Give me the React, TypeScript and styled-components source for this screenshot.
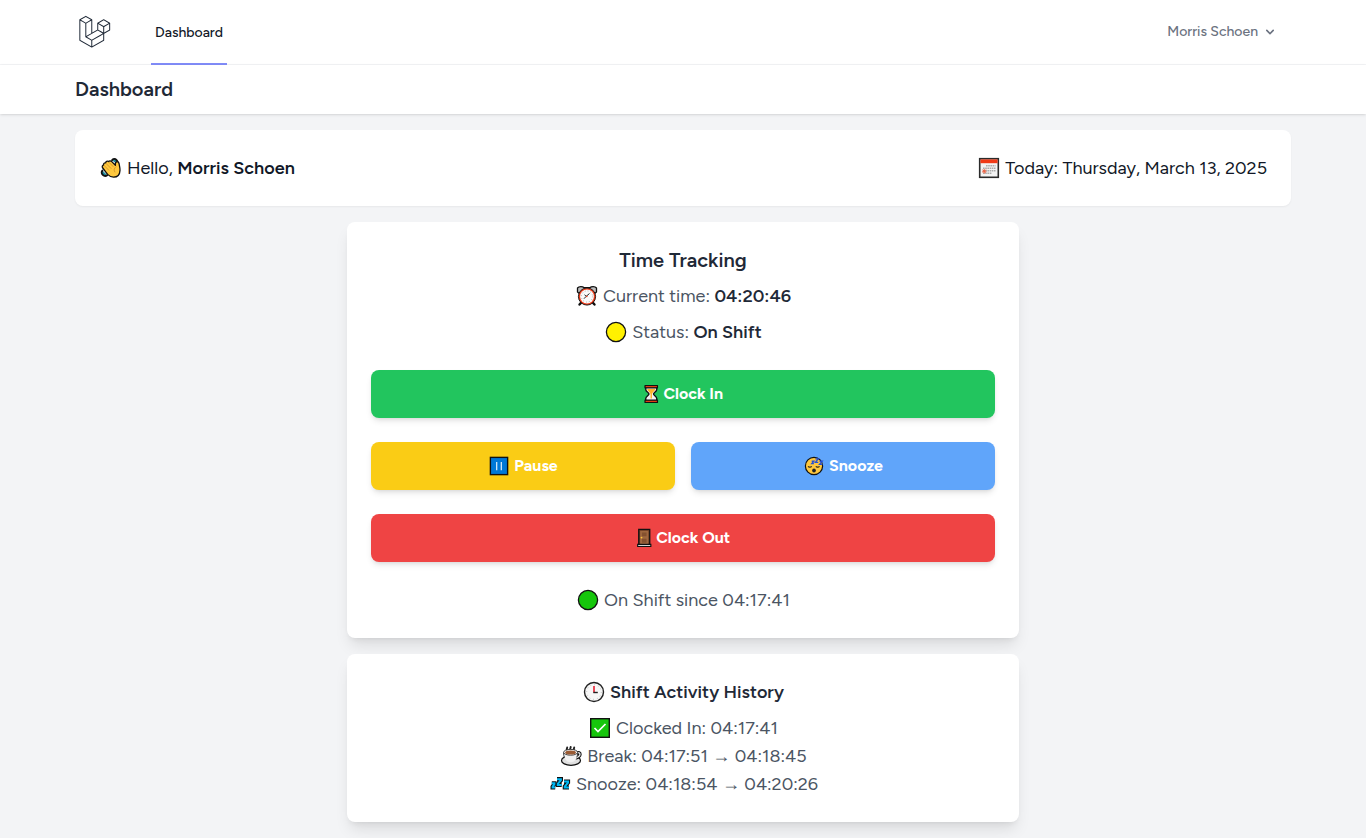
import React from "react";
import styled, { createGlobalStyle } from "styled-components";

const GlobalStyle = createGlobalStyle`
  *, *::before, *::after { box-sizing: border-box; }
  body {
    margin: 0;
    background: #f3f4f6;
    color: #111827;
    font-family: Figtree, Lato, "Open Sans", sans-serif;
    font-size: 16px;
    line-height: 24px;
  }
  h1, h2, h3, p, ul { margin: 0; padding: 0; font-weight: inherit; }
`;

const Container = styled.div`
  max-width: 1280px;
  margin: 0 auto;
  padding: 0 32px;
`;

const Nav = styled.nav`
  background: #fff;
  border-bottom: 1px solid #f3f4f6;
`;

const NavRow = styled(Container)`
  display: flex;
  justify-content: space-between;
  height: 64px;
`;

const NavStart = styled.div`
  display: flex;
  gap: 40px;
`;

const LogoLink = styled.a`
  display: flex;
  align-items: center;
  color: #1f2937;
`;

const NavLink = styled.a`
  display: flex;
  align-items: center;
  margin: -1px 0;
  padding: 4px 4px 0;
  border-bottom: 2px solid #818cf8;
  color: #111827;
  font-size: 14px;
  line-height: 20px;
  font-weight: 500;
  text-decoration: none;
`;

const UserButton = styled.button`
  display: flex;
  align-items: center;
  align-self: center;
  gap: 4px;
  padding: 8px 13px 8px 12px;
  border: 0;
  background: #fff;
  color: #6b7280;
  font: inherit;
  font-size: 14px;
  line-height: 16px;
  font-weight: 500;
  cursor: pointer;
`;

const Header = styled.header`
  position: relative;
  padding: 12px 0;
  background: #fff;
  box-shadow: 0 1px 3px rgba(0, 0, 0, 0.1), 0 1px 2px -1px rgba(0, 0, 0, 0.1);
`;

const PageTitle = styled.h1`
  color: #1f2937;
  font-size: 20px;
  line-height: 25px;
  font-weight: 600;
`;

const Content = styled(Container).attrs({ as: "main" })`
  display: flex;
  flex-direction: column;
  gap: 16px;
  padding-top: 16px;
  padding-bottom: 16px;
`;

const Card = styled.section`
  padding: 24px;
  border-radius: 8px;
  background: #fff;
`;

const Greeting = styled(Card)`
  display: flex;
  justify-content: space-between;
  box-shadow: 0 1px 2px rgba(0, 0, 0, 0.05);
`;

const Panel = styled(Card)`
  width: 100%;
  max-width: 672px;
  margin: 0 auto;
  box-shadow: 0 10px 15px -3px rgba(0, 0, 0, 0.1), 0 4px 6px -4px rgba(0, 0, 0, 0.1);
`;

const Stack = styled.div<{ $gap: number }>`
  display: flex;
  flex-direction: column;
  gap: ${(p) => p.$gap}px;
`;

const Line = styled.p<{ $tone?: "dark" | "muted" }>`
  display: flex;
  align-items: center;
  justify-content: center;
  gap: 4px;
  color: ${(p) => (p.$tone === "dark" ? "#111827" : "#4b5563")};
  font-size: 18px;
  line-height: 28px;
`;

const Strong = styled.strong<{ $tone?: "dark" | "muted" }>`
  color: ${(p) => (p.$tone === "dark" ? "#111827" : "#1f2937")};
  font-weight: 600;
`;

const Arrow = styled.span`
  font-family: "Liberation Serif", "Times New Roman", serif;
  line-height: 1;
`;

const PanelTitle = styled.h2<{ $size: number }>`
  display: flex;
  align-items: center;
  justify-content: center;
  gap: 4px;
  color: #1f2937;
  font-size: ${(p) => p.$size}px;
  line-height: 28px;
  font-weight: 600;
`;

const ButtonPair = styled.div`
  display: grid;
  grid-template-columns: 1fr 1fr;
  gap: 16px;
`;

const ActionButton = styled.button<{ $color: string }>`
  display: flex;
  align-items: center;
  justify-content: center;
  gap: 4px;
  width: 100%;
  padding: 12px 24px;
  border: 0;
  border-radius: 8px;
  background: ${(p) => p.$color};
  box-shadow: 0 4px 6px -1px rgba(0, 0, 0, 0.1), 0 2px 4px -2px rgba(0, 0, 0, 0.1);
  color: #fff;
  font: inherit;
  font-size: 16px;
  line-height: 24px;
  font-weight: 700;
  cursor: pointer;
`;

const Icon = styled.svg`
  display: block;
  flex: none;
`;

/* Every emoji is drawn on a 24-unit tall grid. */
const Emoji = ({ w = 24, size = 24, children }: { w?: number; size?: number; children: React.ReactNode }) => (
  <Icon width={(w * size) / 24} height={size} viewBox={`${(24 - w) / 2} 0 ${w} 24`} aria-hidden="true">
    {children}
  </Icon>
);

const Logo = () => (
  <Icon width="36" height="36" viewBox="-7 -3 58 58" fill="currentColor" aria-hidden="true">
    <path d="M49.626 11.564a.809.809 0 0 1 .028.209v10.972a.8.8 0 0 1-.402.694l-9.209 5.302V39.25c0 .286-.152.55-.4.694L20.42 51.01c-.044.025-.092.041-.14.058-.018.006-.035.017-.054.022a.805.805 0 0 1-.41 0c-.022-.006-.042-.018-.063-.026-.044-.016-.09-.03-.132-.054L.402 39.944A.801.801 0 0 1 0 39.25V6.334c0-.072.01-.142.028-.21.006-.023.02-.044.028-.067.015-.042.029-.085.051-.124.015-.026.037-.047.055-.071.023-.032.044-.065.071-.093.023-.023.053-.04.079-.06.029-.024.055-.05.088-.069h.001l9.61-5.533a.802.802 0 0 1 .8 0l9.61 5.533h.002c.032.02.059.045.088.068.026.02.055.038.078.06.028.029.048.062.072.094.017.024.04.045.054.071.023.04.036.082.052.124.008.023.022.044.028.068a.809.809 0 0 1 .028.209v20.559l8.008-4.611v-10.51c0-.07.01-.141.028-.208.007-.024.02-.045.028-.068.016-.042.03-.085.052-.124.015-.026.037-.047.054-.071.024-.032.044-.065.072-.093.023-.023.052-.04.078-.06.03-.024.056-.05.088-.069h.001l9.611-5.533a.801.801 0 0 1 .8 0l9.61 5.533c.034.02.06.045.09.068.025.02.054.038.077.06.028.029.048.062.072.094.018.024.04.045.054.071.023.039.036.082.052.124.009.023.022.044.028.068zm-1.574 10.718v-9.124l-3.363 1.936-4.646 2.675v9.124l8.01-4.611zm-9.61 16.505v-9.13l-4.57 2.61-13.05 7.448v9.216l17.62-10.144zM1.602 7.719v31.068L19.22 48.93v-9.214l-9.204-5.209-.003-.002-.004-.002c-.031-.018-.057-.044-.086-.066-.025-.02-.054-.036-.076-.058l-.002-.003c-.026-.025-.044-.056-.066-.084-.02-.027-.044-.05-.06-.078l-.001-.003c-.018-.03-.029-.066-.042-.1-.013-.03-.03-.058-.038-.09v-.001c-.01-.038-.012-.078-.016-.117-.004-.03-.012-.06-.012-.09v-.002-21.481L4.965 9.654 1.602 7.72zm8.81-5.994L2.405 6.334l8.005 4.609 8.006-4.61-8.006-4.608zm4.164 28.764l4.645-2.674V7.719l-3.363 1.936-4.646 2.675v20.096l3.364-1.937zM39.243 7.164l-8.006 4.609 8.006 4.609 8.005-4.61-8.005-4.608zm-.801 10.605l-4.646-2.675-3.363-1.936v9.124l4.645 2.674 3.364 1.937v-9.124zM20.02 38.33l11.743-6.704 5.87-3.35-8-4.606-9.211 5.303-8.395 4.833 7.993 4.524z" />
  </Icon>
);

const Chevron = () => (
  <Icon width="16" height="16" viewBox="0 0 20 20" fill="currentColor" aria-hidden="true">
    <path fillRule="evenodd" clipRule="evenodd" d="M5.293 7.293a1 1 0 011.414 0L10 10.586l3.293-3.293a1 1 0 111.414 1.414l-4 4a1 1 0 01-1.414 0l-4-4a1 1 0 010-1.414z" />
  </Icon>
);

const Wave = () => (
  <Emoji>
    <g strokeLinejoin="round" strokeLinecap="round">
      <path d="M13 4.200c1-1.800 3.300-1.600 4.400-.4s1.600 3 .8 4.500M3.500 14.500c-1.300 1.200-1 3.300.2 4.400s3.200 1.400 4.500.3" fill="#17717f" stroke="#111" strokeWidth="1.800" />
      <path d="M15 4.600c1 .1 1.500.8 1.500 1.800M4.400 16.700c.3.900.9 1.300 1.800 1.400" fill="none" stroke="#2aa9c0" strokeWidth="1" />
      <path d="M3.400 11.500c-.5-1.300.2-2.300 1.200-2.400-.4-1.400.7-2.500 2-2.200.1-1.500 1.700-2.200 2.900-1.300.8-1.100 2.200-1 3.200 0l3.700 3.700c-.2-1.800.1-3.500 1.700-3.700 2-.2 2 1.900 2.300 3.900.3 1.500.7 3 .6 4.900-.2 4.200-2.800 6.800-6.400 6.800-2.700 0-4.400-1.200-6-2.800z" fill="#ffc83d" stroke="#111" strokeWidth="1.300" />
      <path d="M5.200 9.600l4.600 4.600M7.200 7.600l4.800 4.800M10 6.400l4.200 4.200M17 10.600c-2 1.600-2.400 3.600-1.200 5.400" fill="none" stroke="#c4872a" strokeWidth=".7" />
    </g>
  </Emoji>
);

const Calendar = () => (
  <Emoji>
    <rect x="2.700" y="2.700" width="18.600" height="18.600" fill="#f3f3f3" stroke="#2b2b2b" strokeWidth="1.600" />
    <path d="M3.400 3.400h17.200v3.800H3.400z" fill="#f03a17" />
    <path d="M9 9.700h9.500M6 12.200h12.500M6 14.700h12.500M6 17.200h9" stroke="#aaa" strokeWidth="1.600" strokeDasharray="1.600 .6" />
    <path d="M5 15.200h4.600M7.300 13v4.600M5.700 13.600l3.200 3.200M8.900 13.600l-3.200 3.200" stroke="#f0603f" strokeWidth=".9" />
  </Emoji>
);

const AlarmClock = () => (
  <Emoji>
    <path d="M2.500 8V4C4 2.300 7.500 2.300 9.200 3.700h5.600C16.500 2.300 20 2.300 21.500 4v4l-2.500 2H5z" fill="#bdbdbd" stroke="#111" strokeWidth="1.300" strokeLinejoin="round" />
    <path d="M6.300 18.500l-1.800 2M17.700 18.500l1.800 2" stroke="#111" strokeWidth="2.400" strokeLinecap="round" />
    <circle cx="12" cy="12.500" r="8.600" fill="#f03a17" stroke="#111" strokeWidth=".9" />
    <circle cx="12" cy="12.500" r="6.900" fill="#fafafa" />
    <circle cx="12" cy="12.500" r="5.600" fill="none" stroke="#999" strokeWidth=".9" strokeDasharray=".8 2.130" />
    <path d="M14.500 9.500L11 12.500l-2 2.200M9.500 10.800l2 1.700" fill="none" stroke="#222" strokeWidth="1" />
    <circle cx="11.800" cy="12.500" r=".8" fill="#f03a17" />
  </Emoji>
);

const Dot = ({ color }: { color: string }) => (
  <Emoji>
    <circle cx="12" cy="12" r="9.600" fill={color} stroke="#111" strokeWidth="1.300" />
  </Emoji>
);

const Hourglass = () => (
  <Emoji w={18} size={22}>
    <path d="M6 4.500h12V7c0 2.500-3.500 3.500-3.500 5s3.500 2.500 3.500 5v2.500H6V17c0-2.500 3.500-3.500 3.500-5S6 9.500 6 7z" fill="#f4f4f4" stroke="#111" strokeWidth="1.500" />
    <path d="M7.500 6.500h9c-.2 2-3.300 3.500-3.700 5.500v5h-1.600v-5c-.4-2-3.500-3.500-3.700-5.500z" fill="#ffb42c" />
    <path d="M5.200 2.700h13.600v2.600H5.200zM5.200 18.700h13.600v2.600H5.200z" fill="#e03c14" stroke="#111" strokeWidth="1.300" strokeLinejoin="round" />
  </Emoji>
);

const PauseSign = () => (
  <Emoji size={22}>
    <rect x="2.600" y="2.600" width="18.800" height="18.800" fill="#0078d7" stroke="#111" strokeWidth="1.500" />
    <path d="M9.500 7.500v9M14.500 7.500v9" stroke="#e8f3fc" strokeWidth="1.300" />
  </Emoji>
);

const Sleepy = () => (
  <Emoji size={22}>
    <circle cx="12" cy="12" r="9.400" fill="#ffc83d" stroke="#111" strokeWidth="1.300" />
    <path d="M5.500 12.500c1 1.100 3 1.100 4 0M14 12.500c1 1.100 3 1.100 4 0" fill="none" stroke="#222" strokeWidth="1.300" />
    <ellipse cx="12" cy="17" rx="2" ry="2.200" fill="#222" />
    <path d="M9.500 6.800h2.400l-2.400 2.700h2.400M13.500 4.200h3.200L13.500 8h3.200M18 6.800h3L18 10.300h3" fill="none" stroke="#2450d8" strokeWidth="1.400" />
  </Emoji>
);

const Door = () => (
  <Emoji w={18} size={22}>
    <path d="M6 2.600h12v17.400H6z" fill="#6b3d24" stroke="#111" strokeWidth="1.400" />
    <path d="M7.500 4.200h9v14.800h-9z" fill="#a0683f" />
    <path d="M9.500 6h5v4h-5zM9.500 12.800h5v4.400h-5z" fill="#84512f" />
    <circle cx="9" cy="11.500" r="1" fill="#ffc83d" />
    <path d="M4.800 19h14.400v2.300H4.800z" fill="#d5d5d5" stroke="#111" strokeWidth="1.200" />
  </Emoji>
);

const Clock = () => (
  <Emoji>
    <circle cx="12" cy="12" r="9.500" fill="#f7f7f7" stroke="#222" strokeWidth="1.400" />
    <circle cx="12" cy="12" r="7.300" fill="none" stroke="#aaa" strokeWidth=".9" strokeDasharray=".8 3.020" />
    <path d="M12 6V12.500" stroke="#e81224" strokeWidth="1.500" />
    <path d="M11.300 12.500h4.500" stroke="#222" strokeWidth="1.400" />
  </Emoji>
);

const Check = () => (
  <Emoji>
    <rect x="2.700" y="2.700" width="18.600" height="18.600" fill="#16c60c" stroke="#111" strokeWidth="1.400" />
    <path d="M6.500 12l3.500 3.500 7.500-7.500" fill="none" stroke="#fff" strokeWidth="1.700" />
  </Emoji>
);

const Coffee = () => (
  <Emoji>
    <path d="M8 6c-1-1 .3-1.500.2-2.500M11.500 5.500c-1-1 .3-1.500.2-2.500M15 6c-1-1 .3-1.500.2-2.500" fill="none" stroke="#222" strokeWidth="1.900" strokeLinecap="round" />
    <ellipse cx="12" cy="16.500" rx="9.500" ry="4.800" fill="#e0e0e0" stroke="#111" strokeWidth="1.200" />
    <path d="M17.500 9c4.500-1.600 5.300 3.500-1.500 5" fill="none" stroke="#111" strokeWidth="3.400" />
    <path d="M17.500 9c4.500-1.600 5.300 3.500-1.500 5" fill="none" stroke="#e9e9e9" strokeWidth="1.300" />
    <path d="M4.800 8.500c0 5 2 9.800 6.900 9.800s6.900-4.800 6.900-9.800z" fill="#f2f2f2" />
    <path d="M4.500 8.500c0 2 .3 3.500 1 5M18.700 8.500c0 2-.3 3.500-1 5" fill="none" stroke="#333" strokeWidth=".9" />
    <ellipse cx="11.600" cy="8.300" rx="7" ry="2.900" fill="#f7f7f7" stroke="#333" strokeWidth=".9" />
    <ellipse cx="11.600" cy="8.600" rx="5.400" ry="2" fill="#9a5b34" />
  </Emoji>
);

const snores = [
  "M3.800 11.300h2.600v.8l-1.800 2.600v.8h2.600",
  "M9 7.200h3.900v1L9.800 11.900v1h3.900",
  "M16 9.600h4v1l-3.200 3.900v1H21",
];
const Zzz = () => (
  <Emoji>
    {snores.map((d) => <path key={d} d={d} fill="none" stroke="#111" strokeWidth="4.200" />)}
    {snores.map((d) => <path key={d} d={d} fill="none" stroke="#00b7f1" strokeWidth="2" />)}
  </Emoji>
);

export default function App() {
  return (
    <>
      <GlobalStyle />
      <Nav>
        <NavRow>
          <NavStart>
            <LogoLink href="#" aria-label="Home"><Logo /></LogoLink>
            <NavLink href="#" aria-current="page">Dashboard</NavLink>
          </NavStart>
          <UserButton type="button">Morris Schoen<Chevron /></UserButton>
        </NavRow>
      </Nav>
      <Header>
        <Container><PageTitle>Dashboard</PageTitle></Container>
      </Header>
      <Content>
        <Greeting>
          <Line $tone="dark"><Wave /><span>Hello, <Strong $tone="dark">Morris Schoen</Strong></span></Line>
          <Line $tone="dark"><Calendar /><span>Today: Thursday, March 13, 2025</span></Line>
        </Greeting>
        <Panel>
          <Stack $gap={24}>
            <Stack $gap={8}>
              <PanelTitle $size={20}>Time Tracking</PanelTitle>
              <Line><AlarmClock /><span>Current time: <Strong>04:20:46</Strong></span></Line>
              <Line><Dot color="#fff100" /><span>Status: <Strong>On Shift</Strong></span></Line>
            </Stack>
            <ActionButton type="button" $color="#22c55e"><Hourglass />Clock In</ActionButton>
            <ButtonPair>
              <ActionButton type="button" $color="#facc15"><PauseSign />Pause</ActionButton>
              <ActionButton type="button" $color="#60a5fa"><Sleepy />Snooze</ActionButton>
            </ButtonPair>
            <ActionButton type="button" $color="#ef4444"><Door />Clock Out</ActionButton>
            <Line><Dot color="#16c60c" /><span>On Shift since 04:17:41</span></Line>
          </Stack>
        </Panel>
        <Panel>
          <Stack $gap={8}>
            <PanelTitle $size={18}><Clock />Shift Activity History</PanelTitle>
            <Stack $gap={0}>
              <Line><Check /><span>Clocked In: 04:17:41</span></Line>
              <Line><Coffee /><span>Break: 04:17:51 <Arrow>→</Arrow> 04:18:45</span></Line>
              <Line><Zzz /><span>Snooze: 04:18:54 <Arrow>→</Arrow> 04:20:26</span></Line>
            </Stack>
          </Stack>
        </Panel>
      </Content>
    </>
  );
}
